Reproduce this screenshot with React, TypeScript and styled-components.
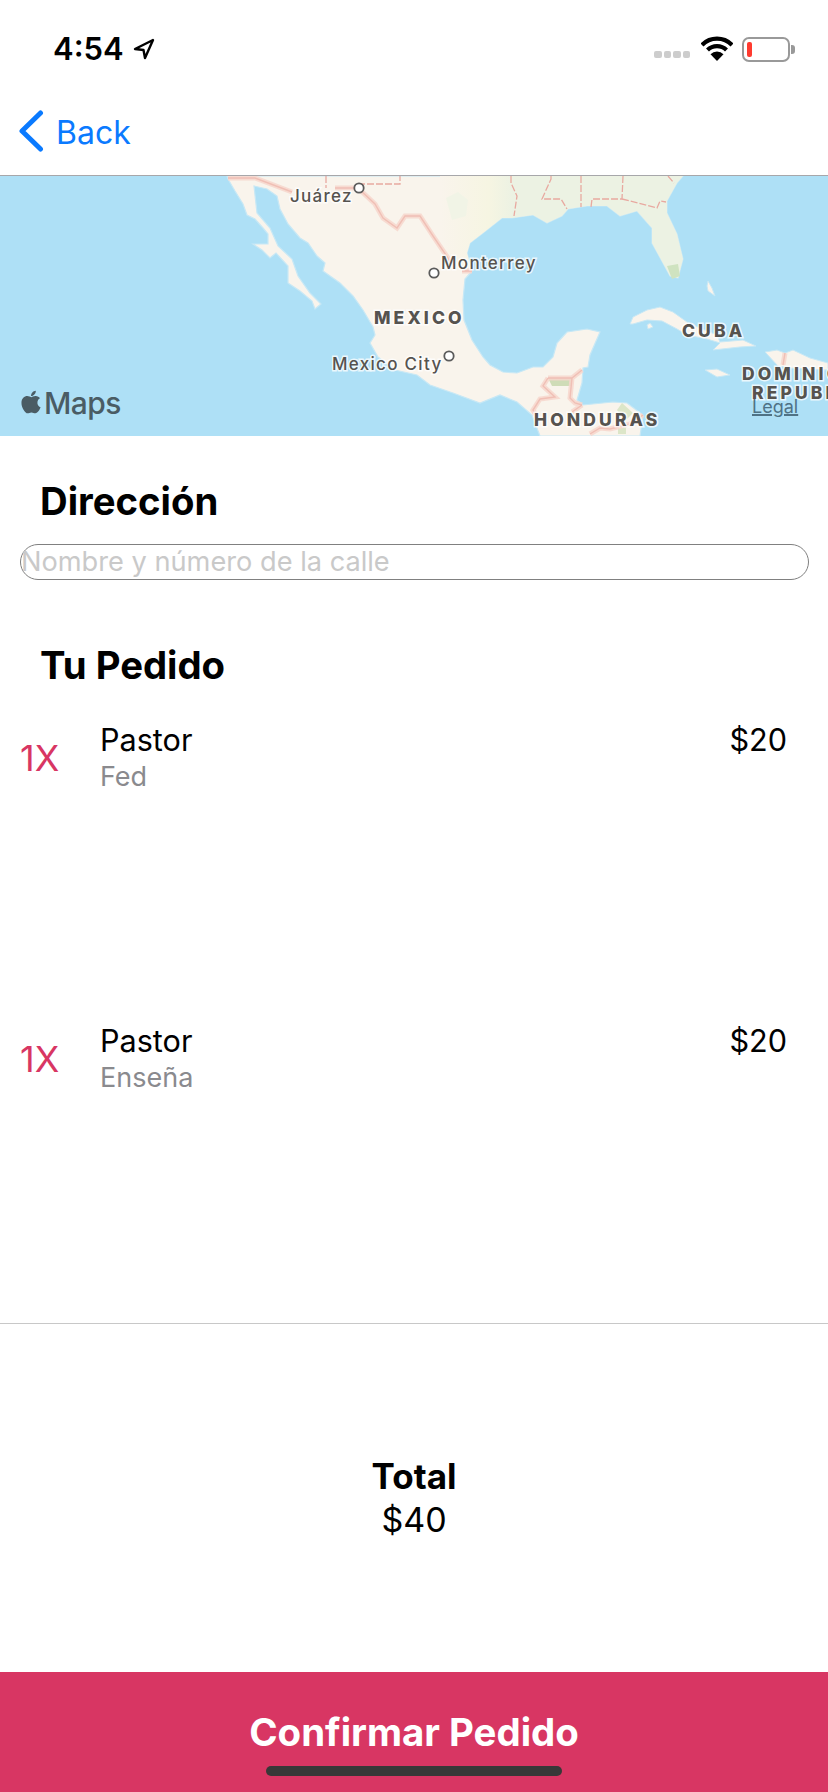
import React from "react";
import styled, { createGlobalStyle } from "styled-components";
import { FaApple } from "react-icons/fa";

const Global = createGlobalStyle`
  html, body { margin: 0; padding: 0; background: #fff; }
  body { font-family: Inter, "Liberation Sans", sans-serif; }
  * { box-sizing: border-box; }
`;

const Page = styled.div`
  width: 828px;
  height: 1792px;
  display: flex;
  flex-direction: column;
  overflow: hidden;
  position: relative;
  background: #fff;
`;

const StatusBar = styled.div`
  height: 88px;
  flex: none;
  display: flex;
  justify-content: space-between;
  align-items: flex-start;
  padding: 31px 38px 0 53px;
`;
const TimeGroup = styled.div`
  display: flex;
  align-items: center;
  gap: 9px;
`;
const Time = styled.span`
  font-size: 31px;
  line-height: 36px;
  font-weight: 600;
  color: #000;
`;
const StatusIcons = styled.div`
  display: flex;
  align-items: center;
  gap: 9px;
  padding-top: 5px;
`;
const SignalDots = styled.div`
  display: flex;
  gap: 2px;
  margin-top: 11px;
  margin-right: 2px;
`;
const SignalDot = styled.i`
  width: 7.5px;
  height: 7px;
  border-radius: 2px;
  background: #cdcdcd;
`;
const Battery = styled.div`
  width: 48px;
  height: 25px;
  border: 2px solid #999;
  border-radius: 7px;
  padding: 3px;
  position: relative;
  &::after {
    content: "";
    position: absolute;
    right: -7px;
    top: 6px;
    width: 4px;
    height: 9px;
    border-radius: 0 3px 3px 0;
    background: #999;
  }
`;
const BatteryLevel = styled.div`
  width: 5px;
  height: 100%;
  border-radius: 2px;
  background: #ff3b30;
`;

const NavBar = styled.div`
  height: 88px;
  flex: none;
  display: flex;
  align-items: flex-start;
  gap: 12px;
  padding: 22px 0 0 18px;
  border-bottom: 1px solid #a7a7aa;
`;
const BackLabel = styled.span`
  font-size: 32px;
  line-height: 40px;
  color: #0a7aff;
  margin-top: 3px;
`;

const MapFrame = styled.div`
  height: 260px;
  flex: none;
  position: relative;
  background: #aee0f6;
  overflow: hidden;
`;
const MapDrawing = styled.svg`
  display: block;
  width: 828px;
  height: 260px;
`;
const MapsLogo = styled.div`
  position: absolute;
  left: 20px;
  top: 209px;
  display: flex;
  align-items: center;
  color: #4a5c64;
  font-size: 30px;
  font-weight: 500;
  line-height: 36px;
  letter-spacing: -0.6px;
`;
const AppleMark = styled(FaApple)`
  width: 26px;
  height: 26px;
  margin-left: -2px;
  margin-top: -3px;
`;
const LegalLink = styled.span`
  position: absolute;
  left: 752px;
  top: 220px;
  font-size: 18px;
  line-height: 22px;
  color: #4f7285;
  text-decoration: underline;
  text-decoration-thickness: 2px;
`;

const Section = styled.div`
  padding: 43px 20px 0;
  flex: none;
`;
const Heading = styled.h2`
  margin: 0;
  padding-left: 20px;
  font-size: 38.3px;
  line-height: 44px;
  font-weight: 700;
  color: #000;
`;
const AddressField = styled.div`
  margin-top: 21px;
  height: 36px;
  width: 789px;
  border: 1px solid #808080;
  border-radius: 18px;
  font-size: 27.2px;
  line-height: 34px;
  color: #c9c9c9;
`;
const OrderHeading = styled(Heading)`
  margin-top: 63px;
`;

const OrderList = styled.div`
  flex: none;
  margin-top: 34px;
`;
const OrderRow = styled.div`
  height: 301px;
  display: flex;
  justify-content: space-between;
  align-items: flex-start;
  padding: 0 41px 0 20px;
`;
const ItemMain = styled.div`
  display: flex;
  align-items: center;
`;
const Quantity = styled.span`
  width: 80px;
  font-size: 36px;
  line-height: 40px;
  color: #d83663;
`;
const ItemText = styled.div`
  display: flex;
  flex-direction: column;
`;
const ItemName = styled.span`
  font-size: 30.6px;
  line-height: 37px;
  color: #000;
`;
const ItemBrand = styled.span`
  font-size: 27px;
  line-height: 37px;
  color: #8a8a8e;
`;
const ItemPrice = styled.span`
  font-size: 30.6px;
  line-height: 37px;
  color: #000;
`;

const TotalBlock = styled.div`
  flex: 1;
  border-top: 1px solid #c8c8c8;
  display: flex;
  flex-direction: column;
  align-items: center;
  justify-content: center;
`;
const TotalLabel = styled.span`
  font-size: 35px;
  line-height: 43px;
  font-weight: 700;
  color: #000;
`;
const TotalValue = styled.span`
  font-size: 34px;
  line-height: 43px;
  color: #000;
`;

const ConfirmBar = styled.div`
  height: 120px;
  flex: none;
  background: #d83663;
  display: flex;
  justify-content: center;
  padding-top: 38px;
  position: relative;
  color: #fff;
  font-size: 38.4px;
  line-height: 44px;
  font-weight: 700;
`;
const HomeIndicator = styled.div`
  position: absolute;
  left: 266px;
  top: 94px;
  width: 296px;
  height: 10px;
  border-radius: 5px;
  background: #383838;
`;

const LAND =
  "227,0 228,3 235,15 243,28 247,39 255,43 263,52 268,58 268,68 253,68 262,74 270,82 276,77 288,90 288,107 300,115 312,125 315,133 321,128 310,117 298,100 292,83 278,70 270,52 257,37 254,10 267,13 277,20 280,33 288,48 300,62 308,67 317,80 325,87 323,95 340,107 353,120 363,134 373,151 375,159 370,167 378,181 395,194 417,199 430,209 453,217 480,227 500,219 517,226 532,239 540,260 640,260 643,239 627,227 613,226 583,229 577,224 582,207 583,192 588,191 590,179 600,156 587,153 567,156 557,167 553,181 543,191 533,191 517,197 503,196 490,189 483,181 472,164 464,144 463,124 465,103 472,95 467,77 470,67 483,57 502,42 512,42 533,39 547,47 562,40 568,33 587,30 607,30 620,40 637,35 652,52 652,67 658,78 670,100 678,102 683,83 677,58 667,37 667,25 677,7 683,0";
const US =
  "440,0 683,0 677,7 667,25 667,37 677,58 683,83 678,102 670,100 658,78 652,67 652,52 637,35 620,40 607,30 587,30 568,33 562,40 547,47 533,39 512,42 502,42 483,57 470,67 467,77 472,95 450,83 440,67";
const CUBA =
  "630,148 633,141 647,134 660,131 673,136 687,146 700,152 717,159 720,166 743,164 756,170 740,171 713,174 720,167 707,163 687,159 677,153 662,145 647,144 633,148";
const ISLANDS = [
  "647,149 650,147 653,151 648,153",
  "705,194 717,193 730,199 717,201",
  "707,110 708,105 712,112 715,120 708,115",
  "765,176 777,174 785,177 793,174 810,182 828,187 828,194 790,192 778,190",
];

const MapLabel = styled.text<{ $heavy?: boolean }>`
  font-family: Inter, "Liberation Sans", sans-serif;
  font-size: ${(p) => (p.$heavy ? 17.5 : 17)}px;
  font-weight: ${(p) => (p.$heavy ? 800 : 500)};
  letter-spacing: ${(p) => (p.$heavy ? 3.1 : 1.3)}px;
  fill: #56534f;
  stroke: rgba(255, 255, 255, 0.75);
  stroke-width: 3px;
  paint-order: stroke;
`;

const Border = ({ d }: { d: string }) => (
  <>
    <path d={d} fill="none" stroke="#f7d6cc" strokeWidth={5} opacity={0.85} />
    <path d={d} fill="none" stroke="#f0bfb5" strokeWidth={1.4} />
  </>
);
const DashedBorder = ({ d }: { d: string }) => (
  <path d={d} fill="none" stroke="#e8a9a0" strokeWidth={1.3} strokeDasharray="7 2" />
);
const CityDot = ({ x, y }: { x: number; y: number }) => (
  <circle cx={x} cy={y} r={4.7} fill="#fff" stroke="#5b5b5b" strokeWidth={1.8} />
);

const MapArt = () => (
  <MapDrawing viewBox="0 0 828 260">
    <defs>
      <linearGradient id="usLand" x1="0" x2="1" y1="0" y2="0">
        <stop offset="0" stopColor="#f9f4ec" />
        <stop offset="0.2" stopColor="#f6f5e2" />
        <stop offset="0.3" stopColor="#ecf2e3" />
        <stop offset="1" stopColor="#ecf2e3" />
      </linearGradient>
    </defs>
    <polygon points={LAND} fill="#f9f4ec" stroke="#c8e8f5" strokeWidth={1.2} />
    <polygon points={US} fill="url(#usLand)" />
    <polygon points="446,22 458,16 468,24 466,40 452,44" fill="#f1f4e6" />
    <polygon points="667,90 678,88 680,100 672,103" fill="#cfe3c0" />
    <polygon points={CUBA} fill="#f9f4ec" stroke="#c8e8f5" strokeWidth={1} />
    {ISLANDS.map((p) => (
      <polygon key={p} points={p} fill="#f9f4ec" stroke="#c8e8f5" strokeWidth={1} />
    ))}
    <polygon points="548,202 572,202 572,210 552,210" fill="#cfdcb7" />
    <polygon points="617,234 622,227 633,237 625,245" fill="#dce6c8" />
    <polygon points="618,250 626,248 626,258 618,258" fill="#dce6c8" />
    <Border d="M228,2 L255,2 L292,16 M335,12 L358,12 L375,28 L383,42 L397,52 L405,40 L420,40 L433,60 L448,82 L450,86 M462,95 L472,95" />
    <DashedBorder d="M326,0 L326,12 M358,8 L400,8 L400,0" />
    <DashedBorder d="M511,0 L511,7 L517,20 L514,40 M551,0 L551,3 L542,23 L561,23 L567,33 M581,0 L581,31 M623,0 L622,23 L592,23 L591,31 M622,23 L657,32 L660,25 L666,26 M668,0 L674,7" />
    <Border d="M548,202 L572,202 L582,194 M548,202 L543,210 L555,221 L540,223 L533,234 L537,241 M572,202 L570,222 L575,227 L582,229 M582,229 L572,236 M590,258 L600,252 L610,253 L630,248 L643,239" />
    <Border d="M785,177 L783,189" />
    <CityDot x={359} y={12} />
    <CityDot x={434} y={97} />
    <CityDot x={449} y={180} />
    <MapLabel x={290} y={26}>Juárez</MapLabel>
    <MapLabel x={441} y={93}>Monterrey</MapLabel>
    <MapLabel x={332} y={194}>Mexico City</MapLabel>
    <MapLabel $heavy x={374} y={148}>MEXICO</MapLabel>
    <MapLabel $heavy x={682} y={161}>CUBA</MapLabel>
    <MapLabel $heavy x={742} y={204}>DOMINIC</MapLabel>
    <MapLabel $heavy x={752} y={223}>REPUBL</MapLabel>
    <MapLabel $heavy x={534} y={250}>HONDURAS</MapLabel>
  </MapDrawing>
);

const Item = ({ brand }: { brand: string }) => (
  <OrderRow>
    <ItemMain>
      <Quantity>1X</Quantity>
      <ItemText>
        <ItemName>Pastor</ItemName>
        <ItemBrand>{brand}</ItemBrand>
      </ItemText>
    </ItemMain>
    <ItemPrice>$20</ItemPrice>
  </OrderRow>
);

export default function App() {
  return (
    <Page>
      <Global />
      <StatusBar>
        <TimeGroup>
          <Time>4:54</Time>
          <svg width="22" height="22" viewBox="0 0 22 22">
            <path d="M20 2 L2 11 L10.5 12 L12 20 Z" fill="none" stroke="#000" strokeWidth="2.4" strokeLinejoin="round" />
          </svg>
        </TimeGroup>
        <StatusIcons>
          <SignalDots>
            <SignalDot />
            <SignalDot />
            <SignalDot />
            <SignalDot />
          </SignalDots>
          <svg width="32" height="26" viewBox="0 0 32 26">
            <path d="M1 9 A21 21 0 0 1 31 9" fill="none" stroke="#000" strokeWidth="4.2" />
            <path d="M6.5 14 A13.5 13.5 0 0 1 25.5 14" fill="none" stroke="#000" strokeWidth="4.2" />
            <path d="M16 25 L9.5 18.2 A9 9 0 0 1 22.5 18.2 Z" fill="#000" />
          </svg>
          <Battery>
            <BatteryLevel />
          </Battery>
        </StatusIcons>
      </StatusBar>
      <NavBar>
        <svg width="26" height="42" viewBox="0 0 26 42">
          <path d="M22.5 3 L4 21 L22.5 39" fill="none" stroke="#0a7aff" strokeWidth="5" strokeLinecap="round" strokeLinejoin="round" />
        </svg>
        <BackLabel>Back</BackLabel>
      </NavBar>
      <MapFrame>
        <MapArt />
        <MapsLogo>
          <AppleMark />
          Maps
        </MapsLogo>
        <LegalLink>Legal</LegalLink>
      </MapFrame>
      <Section>
        <Heading>Dirección</Heading>
        <AddressField>Nombre y número de la calle</AddressField>
        <OrderHeading>Tu Pedido</OrderHeading>
      </Section>
      <OrderList>
        <Item brand="Fed" />
        <Item brand="Enseña" />
      </OrderList>
      <TotalBlock>
        <TotalLabel>Total</TotalLabel>
        <TotalValue>$40</TotalValue>
      </TotalBlock>
      <ConfirmBar>
        Confirmar Pedido
        <HomeIndicator />
      </ConfirmBar>
    </Page>
  );
}
